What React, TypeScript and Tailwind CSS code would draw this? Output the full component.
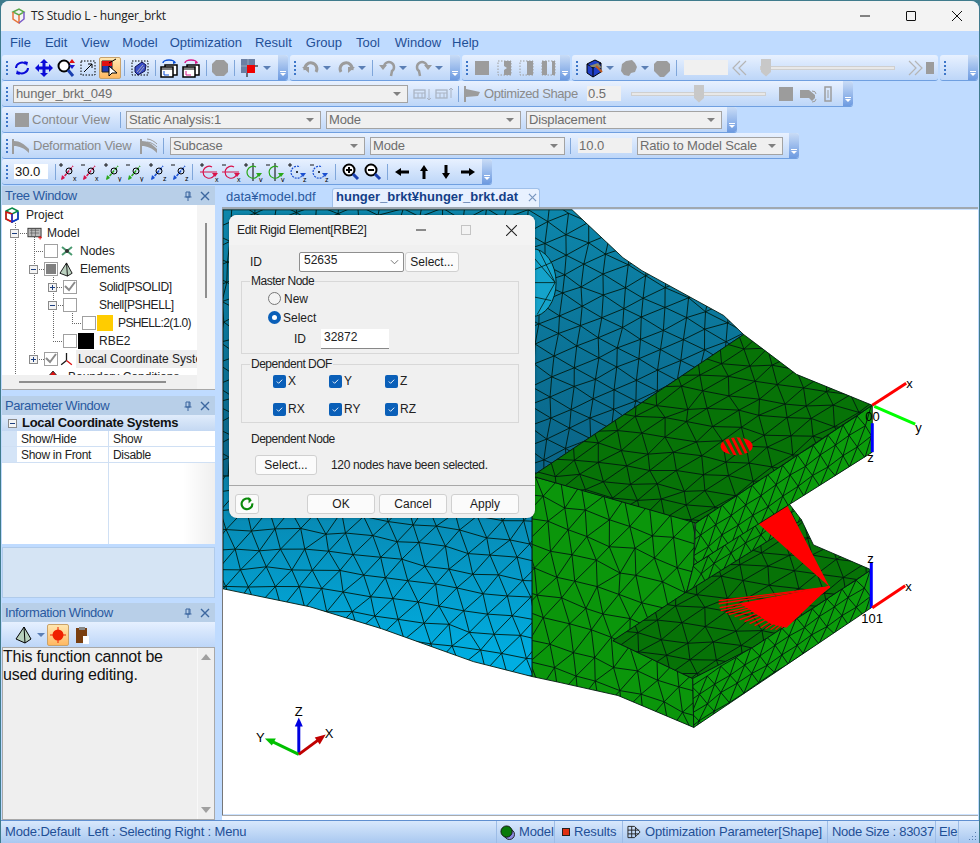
import React from "react";

type P = [number, number];
const rnd = (a: number, b: number) => {
  const s = Math.sin(a * 127.1 + b * 311.7) * 43758.5453;
  return s - Math.floor(s) - 0.5;
};
function lattice(o: P, u: P, v: P, nu: number, nv: number, jit = 4, wave?: (x: number, y: number) => P) {
  const pt = (i: number, j: number): string => {
    const odd = j % 2 ? 0.5 : 0;
    let x = o[0] + (i + odd) * u[0] + j * v[0] + rnd(i, j) * jit;
    let y = o[1] + (i + odd) * u[1] + j * v[1] + rnd(j + 9, i + 3) * jit;
    if (wave) {
      const w = wave(x, y);
      x += w[0];
      y += w[1];
    }
    return `${x.toFixed(1)} ${y.toFixed(1)}`;
  };
  let d = "";
  for (let j = 0; j <= nv; j++)
    for (let i = 0; i <= nu; i++) {
      d += `M${pt(i, j)}L${pt(i + 1, j)}`;
      if (j < nv) {
        const odd = j % 2 === 1;
        d += `M${pt(i, j)}L${pt(odd ? i : i - 1, j + 1)}M${pt(i, j)}L${pt(odd ? i + 1 : i, j + 1)}`;
      }
    }
  return d;
}
const Surf = ({ id, pts, fill, d }: { id: string; pts: string; fill: string; d: string }) => (
  <g>
    <clipPath id={id}>
      <polygon points={pts} />
    </clipPath>
    <polygon points={pts} fill={fill} />
    <path d={d} clipPath={`url(#${id})`} stroke="#021a10" strokeWidth="0.9" fill="none" />
    <polygon points={pts} fill="none" stroke="#021a10" strokeWidth="0.9" />
  </g>
);
const fanTips: P[] = [[720,601],[720,604],[721,608],[722,611],[727,613],[730,615],[736,617],[741,620],[746,622],[751,624],[756,626],[762,628],[767,629],[772,630],[777,630],[783,628]];

function Viewport() {
  return (
    <svg viewBox="223 209 757 606" className="block h-[606px] w-[757px]">
      <defs>
        <linearGradient id="gA" gradientUnits="userSpaceOnUse" x1="0" y1="209" x2="0" y2="470">
          <stop offset="0" stopColor="#0d86ab" />
          <stop offset="1" stopColor="#0a6487" />
        </linearGradient>
        <linearGradient id="gB" gradientUnits="userSpaceOnUse" x1="0" y1="470" x2="0" y2="660">
          <stop offset="0" stopColor="#0a7fa6" />
          <stop offset="1" stopColor="#00aee2" />
        </linearGradient>
      </defs>
      <rect x="223" y="209" width="757" height="606" fill="#fff" />
      <Surf id="cA" fill="url(#gA)" pts="223,209 573,209 624,257 643,270 725,315 745,334 533,476 223,476" d={lattice([330, 80], [20, 11], [-12, 15], 36, 30, 4)} />
      <ellipse cx="533" cy="282" rx="24" ry="34" fill="#15a3cb" stroke="#021a10" strokeWidth="0.9" />
      <path d="M556 282L533 255M556 282L540 250M556 282L533 282M556 282L538 314M552 262L533 270M552 300L533 296" stroke="#021a10" strokeWidth="0.8" />
      <Surf id="cB" fill="url(#gB)" pts="223,476 533,476 533,677 474,662 382,629 310,607 223,589" d={lattice([200, 450], [24, 2], [-5, 19], 16, 13, 5, (x) => [0, 6 * Math.sin(x / 70)])} />
      <Surf id="cC" fill="#0b960b" pts="533,476 696,522 695,565 688,592 614,641 694,679 695,728 619,696 561,683 533,677" d={lattice([510, 440], [22, 7], [-6, 22], 11, 14, 7)} />
      <Surf id="cD" fill="#077307" pts="688,592 803,520 815,545 873,570 754,648 694,679 614,641" d={lattice([540, 640], [21, -14], [15, 10], 20, 16, 6)} />
      <Surf id="cW" fill="#0b960b" pts="695,565 790,503 803,520 688,592" d={lattice([695, 565], [15, -10], [-1, 14], 10, 3, 3)} />
      <Surf id="cE" fill="#0b9c0b" pts="873,570 754,648 694,679 695,728 873,608" d={lattice([873, 570], [-15, 9.7], [0, 13.5], 13, 5, 2)} />
      <polygon points="788,504 759,523 831,587" fill="#ff0000" />
      <polygon points="831,587 742,604 772,624 788,628" fill="#ff0000" />
      {fanTips.map((t, i) => (
        <line key={i} x1="831" y1="587" x2={t[0]} y2={t[1]} stroke="#ff0000" strokeWidth="1.3" />
      ))}
      <Surf id="cG" fill="#077307" pts="745,334 798,374 874,405 697,523 533,476" d={lattice([500, 450], [21, -14], [15, 10], 24, 22, 7)} />
      <Surf id="cF" fill="#0b9c0b" pts="874,405 697,523 695,565 874,452" d={lattice([874, 405], [-15, 10], [0, 15.5], 13, 4, 2)} />
      <clipPath id="cH">
        <ellipse cx="738" cy="446" rx="16" ry="9" />
      </clipPath>
      <ellipse cx="738" cy="446" rx="16" ry="9" fill="#ff0000" />
      <path d="M724 438L734 456M730 436L740 456M736 436L746 456M742 436L752 456" stroke="#0a6a0a" strokeWidth="2.6" clipPath="url(#cH)" />
      <line x1="874" y1="405" x2="908" y2="383" stroke="#ff0000" strokeWidth="3" />
      <line x1="876" y1="406" x2="917" y2="424" stroke="#00ff00" strokeWidth="3" />
      <line x1="874" y1="423" x2="874" y2="452" stroke="#0000ff" strokeWidth="3" />
      <line x1="873" y1="563" x2="873" y2="608" stroke="#0000ff" strokeWidth="3" />
      <line x1="874" y1="608" x2="907" y2="586" stroke="#ff0000" strokeWidth="3" />
      <g fontFamily="'Liberation Sans',sans-serif" fontSize="13" fill="#000">
        <text x="908" y="388">x</text>
        <text x="917" y="432">y</text>
        <text x="869" y="462">z</text>
        <text x="867" y="421">00</text>
        <text x="869" y="563">z</text>
        <text x="907" y="591">x</text>
        <text x="863" y="623">101</text>
        <text x="295" y="717">Z</text>
        <text x="256" y="743">Y</text>
        <text x="325" y="739">X</text>
      </g>
      <line x1="299" y1="755" x2="299" y2="725" stroke="#0000e0" strokeWidth="3" />
      <polygon points="299,718 295,727 303,727" fill="#0000e0" />
      <line x1="299" y1="755" x2="272" y2="742" stroke="#00c000" strokeWidth="3" />
      <polygon points="265,739 276,739 272,746" fill="#00c000" />
      <line x1="299" y1="755" x2="318" y2="741" stroke="#c00000" strokeWidth="3" />
      <polygon points="326,735 315,738 320,745" fill="#c00000" />
    </svg>
  );
}

const I = ({ children }: { children: React.ReactNode }) => (
  <svg viewBox="0 0 20 20" className="h-[20px] w-[20px]">{children}</svg>
);
const Slot = ({ className = "", children }: { className?: string; children?: React.ReactNode }) => (
  <div className={`flex h-[22px] w-[22px] shrink-0 items-center justify-center ${className}`}>{children}</div>
);
const Sep = ({ className = "" }: { className?: string }) => <div className={`h-[16px] w-[1px] shrink-0 bg-[#7fa6da] ${className}`} />;
const Arrow = ({ className = "" }: { className?: string }) => (
  <div className={`h-0 w-0 shrink-0 border-x-[4px] border-t-[4px] border-x-transparent border-t-[#5b7fb5] ${className}`} />
);
const Grip = () => (
  <div className="flex h-full w-[9px] shrink-0 flex-col items-end justify-center gap-[2px] pr-[3px]">
    <div className="h-[2px] w-[2px] bg-[#3d76c8]" />
    <div className="h-[2px] w-[2px] bg-[#3d76c8]" />
    <div className="h-[2px] w-[2px] bg-[#3d76c8]" />
    <div className="h-[2px] w-[2px] bg-[#3d76c8]" />
  </div>
);
const Handle = () => (
  <div className="ml-auto flex h-full w-[10px] shrink-0 flex-col items-center justify-end rounded-r-[3px] bg-gradient-to-b from-[#c9dcf6] to-[#6d9ae0] pb-[4px]">
    <div className="mb-[1px] h-[1px] w-[6px] bg-white" />
    <div className="h-0 w-0 border-x-[3px] border-t-[3px] border-x-transparent border-t-white" />
  </div>
);
const Bar = ({ className = "", children, handle = true }: { className?: string; children?: React.ReactNode; handle?: boolean }) => (
  <div className={`flex h-[26px] shrink-0 items-center rounded-[3px] border-b border-[#6f9fe0] bg-gradient-to-b from-[#e8f1ff] to-[#bdd6f8] ${className}`}>
    <Grip />
    {children}
    {handle && <Handle />}
  </div>
);
const Sel = ({ className = "", children }: { className?: string; children?: React.ReactNode }) => (
  <div className={`flex h-[18px] shrink-0 items-center justify-between border border-[#a3a3a3] bg-[#f0f0f0] pl-[2px] pr-[6px] text-[13px] tracking-[-0.15px] text-[#6d6d6d] ${className}`}>
    <span className="whitespace-nowrap">{children}</span>
    <div className="h-0 w-0 border-x-[4px] border-t-[4px] border-x-transparent border-t-[#808080]" />
  </div>
);
const Input = ({ className = "", children }: { className?: string; children?: React.ReactNode }) => (
  <div className={`flex h-[15px] shrink-0 items-center bg-[#f0f0f0] pl-[1px] text-[13px] text-[#6d6d6d] ${className}`}>{children}</div>
);
const Slider = ({ className = "", thumb }: { className?: string; thumb: string }) => (
  <div className={`flex h-[4px] shrink-0 border border-[#cfcfcf] bg-[#e8e8e8] ${className}`}>
    <div className={`-mt-[8px] h-[18px] w-[10px] shrink-0 bg-[#c8c8c8] [clip-path:polygon(0_0,100%_0,100%_75%,50%_100%,0_75%)] ${thumb}`} />
  </div>
);

const G = "#9c9c9c";
const BL = "#0a0ad8";
const Rotate = () => (
  <I>
    <path d="M4 10a6 5.5 0 0 1 10-4M16 10a6 5.5 0 0 1-10 4" fill="none" stroke={BL} strokeWidth="2" />
    <path d="M12 3l4 1-1 4zM8 17l-4-1 1-4z" fill={BL} />
  </I>
);
const Move = () => (
  <I>
    <path d="M10 1l4 4h-2.5v3.5H15V6l4 4-4 4v-2.5h-3.5V15H14l-4 4-4-4h2.5v-3.5H5V14l-4-4 4-4v2.5h3.5V5H6z" fill={BL} />
  </I>
);
const Zoom = () => (
  <I>
    <circle cx="8" cy="8" r="5.5" fill="#fff" stroke="#000" strokeWidth="2" />
    <line x1="12" y1="12" x2="17" y2="18" stroke="#1a3fb0" strokeWidth="3" />
    <path d="M15 1l3 4h-6z" fill="#e01010" transform="translate(1 0)" />
    <path d="M13 7h6l-3 4z" fill="#1a1ad0" />
  </I>
);
const Fit = () => (
  <I>
    <rect x="3" y="3" width="14" height="14" fill="none" stroke="#000" strokeWidth="1" strokeDasharray="1.5 1.5" />
    <path d="M6 14L14 6M10 6h4v4" fill="none" stroke="#000" />
  </I>
);
const Hidden = () => (
  <I>
    <rect x="2" y="3" width="16" height="14" fill="none" stroke="#000" strokeDasharray="1.5 1.5" />
    <path d="M5 9l7-5 4 3-1 6-7 4-3-3z" fill="#3b4fc8" stroke="#101050" />
    <path d="M7 14l6-7M9 15l5-6" stroke="#aab" />
  </I>
);
const Win = ({ c }: { c: string }) => (
  <I>
    <path d="M4 5a6 3 0 0 1 12 0" fill="none" stroke={c} strokeWidth="1.5" />
    <path d="M14 3l3 2-3 1z" fill={c} />
    <rect x="6" y="7" width="12" height="10" fill="#fff" stroke="#000" strokeWidth="1.5" />
    <rect x="2" y="9" width="12" height="10" fill="#fff" stroke="#000" strokeWidth="1.5" />
    <path d="M2 11h12" stroke="#000" />
    <path d="M5 13v4h5" fill="none" stroke={c} />
  </I>
);
const Oct = () => (
  <I>
    <polygon points="6,2 14,2 18,6 18,14 14,18 6,18 2,14 2,6" fill={G} />
  </I>
);
const Color = () => (
  <I>
    <rect x="1" y="1" width="14" height="14" fill="#6b7fa3" />
    <path d="M8 1v14M1 8h14" stroke="#9ab" />
    <rect x="7" y="7" width="8" height="8" fill="#f00000" />
    <path d="M15 8h3M7 15v4" stroke="#000" />
  </I>
);
const Undo = ({ flip }: { flip?: boolean }) => (
  <I>
    <g transform={flip ? "matrix(-1 0 0 1 20 0)" : undefined}>
      <path d="M4 12a6 6 0 1 1 11 2" fill="none" stroke={G} strokeWidth="3" />
      <path d="M1 9h7v6z" fill={G} />
    </g>
  </I>
);
const Redo2 = ({ flip }: { flip?: boolean }) => (
  <I>
    <g transform={flip ? "matrix(-1 0 0 1 20 0)" : undefined}>
      <path d="M6 9a5 5 0 1 1 8 4l-1 5" fill="none" stroke={G} strokeWidth="2.5" />
      <path d="M1 7h8l-4 5z" fill={G} />
    </g>
  </I>
);
const GSquare = () => (
  <I>
    <rect x="3" y="3" width="14" height="14" fill={G} />
  </I>
);
const Half = ({ kind }: { kind: number }) => (
  <I>
    <rect x="4" y="3" width="13" height="14" fill="none" stroke={G} strokeDasharray="1.5 1.5" />
    {kind === 0 && <path d="M10 3h7v14h-7v-5l3-2-3-2z" fill={G} />}
    {kind === 1 && <rect x="11" y="3" width="6" height="14" fill={G} />}
    {kind === 2 && <path d="M4 3h5v14H4zM14 3h3v14h-3z" fill={G} />}
  </I>
);
const Cube = () => (
  <I>
    <path d="M3 6l8-4 6 3v9l-8 5-6-4z" fill="#1f3fc8" stroke="#000" />
    <path d="M3 6l6 4 8-5M9 10v9" stroke="#000" fill="none" />
    <path d="M5 8l9-3 4 5-10-1z" fill="#8a8a70" />
    <path d="M12 8l6 6" stroke="#c05a20" strokeWidth="2" />
  </I>
);
const GBlob = () => (
  <I>
    <path d="M7 3l6-1 3 3 2 4-2 5-4 1-2 3-5-1-3-4 1-7z" fill={G} />
  </I>
);
const GBlob2 = () => (
  <I>
    <path d="M5 3h10l3 3v7l-4 4-2 2H8l-2-2-4-4V6z" fill={G} />
  </I>
);
const Chevs = ({ left }: { left?: boolean }) => (
  <I>
    <path d={left ? "M10 3L3 10l7 7M16 3l-7 7 7 7" : "M4 3l7 7-7 7M10 3l7 7-7 7"} fill="none" stroke="#b5b5b5" strokeWidth="1.2" />
  </I>
);
const SmallDown = ({ up }: { up?: boolean }) => (
  <I>
    <rect x="2" y="6" width="11" height="8" fill="none" stroke="#aab4c4" strokeWidth="1.3" />
    <path d="M2 9h11M6 9v5M10 9v5" stroke="#aab4c4" />
    <path d={up ? "M17 14V4M15 6l2-2 2 2" : "M17 5v11M15 14l2 2 2-2"} fill="none" stroke="#aab4c4" />
  </I>
);
const Flag = () => (
  <I>
    <path d="M2 2v16" stroke={G} strokeWidth="2" />
    <path d="M3 5l14 3-2 4-12 1z" fill={G} />
  </I>
);
const Beam = ({ wave }: { wave?: boolean }) => (
  <I>
    <path d="M2 3v15" stroke={G} strokeWidth="2" />
    <path d="M3 5c6 0 10 3 15 8v4C13 12 8 10 3 10z" fill={G} />
    {wave && <path d="M8 3c4 0 8 3 10 5M8 6c4 0 8 3 10 5" fill="none" stroke={G} />}
  </I>
);
const Pen = () => (
  <I>
    <path d="M2 4v14M2 6h9l6 5v3l-3 3-3-3H2z" fill={G} />
    <path d="M14 7a4 3 0 0 1 4 3M14 18a4 3 0 0 0 4-3" fill="none" stroke={G} />
  </I>
);
const Rect2 = () => (
  <I>
    <rect x="7" y="3" width="6" height="14" fill="none" stroke={G} strokeWidth="1.5" />
    <path d="M10 6v8" stroke={G} />
  </I>
);
const Ax = ({ c, plus, l }: { c: string; plus?: boolean; l: string }) => (
  <I>
    <path d={plus ? "M1 3h4M3 1v4" : "M1 3h4"} stroke="#000" strokeWidth="0.9" />
    <path d="M4 17L15 4" stroke={c} strokeWidth="1.5" strokeDasharray="3 1" />
    <path d="M3 18l1-5 3 3z" fill={c} />
    <circle cx="11" cy="9" r="3" fill="none" stroke="#000" />
    <text x="15" y="19" fontSize="7" fill="#000" fontFamily="'Liberation Sans',sans-serif">{l}</text>
  </I>
);
const Sp = ({ c, plus, l, dir }: { c: string; plus?: boolean; l: string; dir: "h" | "v" | "z" }) => (
  <I>
    <path d={plus ? "M0 3h4M2 1v4" : "M0 3h4"} stroke="#000" strokeWidth="0.9" />
    {dir === "h" && <path d="M0 10h17" stroke={c} strokeWidth="1" />}
    {dir === "v" && <path d="M9 1v18" stroke="#000" strokeWidth="1" />}
    <path d="M15 11a6 6 0 1 1-3-6" fill="none" stroke={c} strokeWidth="1.2" strokeDasharray={dir === "z" ? "2 1" : undefined} />
    <path d="M15 15l-3-4h6z" fill={c} />
    {dir === "z" && <circle cx="9" cy="10" r="1" fill="#000" />}
    <text x="15" y="19.5" fontSize="7" fill="#000" fontFamily="'Liberation Sans',sans-serif">{l}</text>
  </I>
);
const Mag = ({ plus }: { plus?: boolean }) => (
  <I>
    <circle cx="8" cy="8" r="5.5" fill="#fff" stroke="#000" strokeWidth="2" />
    <path d={plus ? "M5 8h6M8 5v6" : "M5 8h6"} stroke="#000" strokeWidth="2" />
    <line x1="12" y1="12" x2="17" y2="17" stroke="#1a3fb0" strokeWidth="3" />
  </I>
);
const Dir = ({ r }: { r: number }) => (
  <I>
    <path d="M10 3l4 6h-2.5v8h-3V9H6z" fill="#000" transform={`rotate(${r} 10 10)`} />
  </I>
);
const Pyramid = () => (
  <I>
    <path d="M10 2l7 12-6 4-9-4z" fill="#b8d0bc" stroke="#000" />
    <path d="M10 2l1 16" stroke="#000" />
  </I>
);

const Exp = ({ minus, className = "" }: { minus?: boolean; className?: string }) => (
  <div className={`flex h-[9px] w-[9px] shrink-0 items-center justify-center border border-[#8a8a8a] bg-[#f4f4f4] text-[#333] ${className}`}>
    <svg viewBox="0 0 7 7" className="h-[7px] w-[7px]">
      <path d={minus ? "M1 3.5h5" : "M1 3.5h5M3.5 1v5"} stroke="#1c3f80" />
    </svg>
  </div>
);
const Cb = ({ state, className = "" }: { state?: "check" | "fill"; className?: string }) => (
  <div className={`flex h-[14px] w-[14px] shrink-0 items-center justify-center border border-[#a0a0a0] bg-white ${className}`}>
    {state === "fill" && <div className="h-[10px] w-[10px] bg-[#808080]" />}
    {state === "check" && (
      <svg viewBox="0 0 12 12" className="h-[12px] w-[12px]">
        <path d="M1 5l4 4 6-8" fill="none" stroke="#8a8a8a" strokeWidth="2" />
      </svg>
    )}
  </div>
);
const PaneHead = ({ children }: { children: React.ReactNode }) => (
  <div className="flex h-[19px] shrink-0 items-center justify-between bg-[#b8cfe8] pl-[3px] pr-[5px] text-[13px] tracking-[-0.4px] text-[#2a5aa0]">
    <span>{children}</span>
    <div className="flex items-center gap-[7px]">
      <svg viewBox="0 0 10 10" className="h-[10px] w-[10px]">
        <path d="M3 1h4v5H3zM1.5 6h7M5 6v4M6 1v5" fill="none" stroke="#3c679f" />
      </svg>
      <svg viewBox="0 0 10 10" className="h-[10px] w-[10px]">
        <path d="M1 1l8 8M9 1l-8 8" stroke="#3c679f" strokeWidth="1.4" />
      </svg>
    </div>
  </div>
);
const Row = ({ className = "", children }: { className?: string; children: React.ReactNode }) => (
  <div className={`flex h-[18px] shrink-0 items-center whitespace-nowrap text-[12px] text-[#222] ${className}`}>{children}</div>
);
const TreeLines = () => (
  <svg className="absolute left-0 top-0 h-[170px] w-[195px]" viewBox="0 0 195 170">
    <path
      d="M13 18v152M18 28h7M32 28v80M32 46h12M37 64h7M51 64v70M51 82h12M56 100h7M70 100v18M70 118h12M51 136h12M37 154h7M32 64v90"
      fill="none"
      stroke="#666"
      strokeDasharray="1 1"
      shapeRendering="crispEdges"
    />
  </svg>
);
const DlgBtn = ({ className = "", children }: { className?: string; children: React.ReactNode }) => (
  <div className={`flex h-[20px] shrink-0 items-center justify-center rounded-[3px] border border-[#d0d0d0] bg-[#fbfbfb] text-[12px] text-[#1a1a1a] ${className}`}>{children}</div>
);
const Dof = ({ className = "", children }: { className?: string; children: string }) => (
  <div className={`flex items-center gap-[2px] text-[12px] text-[#222] ${className}`}>
    <div className="flex h-[13px] w-[13px] items-center justify-center rounded-[2px] bg-[#0a5fb8]">
      <svg viewBox="0 0 10 10" className="h-[9px] w-[9px]">
        <path d="M2 5l2 2 4-4" fill="none" stroke="#fff" strokeWidth="1" />
      </svg>
    </div>
    {children}
  </div>
);
const Legend = ({ children }: { children: string }) => (
  <span className="absolute -top-[8px] left-[8px] bg-[#f0f0f0] px-[1px] text-[12px] leading-[15px] tracking-[-0.5px] text-[#222]">{children}</span>
);

function Dialog() {
  return (
    <div className="absolute left-[229px] top-[215px] flex h-[303px] w-[306px] flex-col rounded-[8px] bg-[#f0f0f0] font-['Liberation_Sans',sans-serif] text-[#222] shadow-[0_0_3px_rgba(0,0,0,0.35)]">
      <div className="flex h-[30px] shrink-0 items-center rounded-t-[8px] bg-[#f3f3f3] pl-[8px] text-[12px]">
        <span className="w-[130px] whitespace-nowrap tracking-[-0.3px]">Edit Rigid Element[RBE2]</span>
        <svg viewBox="0 0 10 10" className="ml-[49px] h-[10px] w-[10px]"><path d="M0 5h10" stroke="#222" /></svg>
        <div className="ml-[35px] h-[10px] w-[10px] border border-[#c4c4c4]" />
        <svg viewBox="0 0 10 10" className="ml-[35px] h-[11px] w-[11px]"><path d="M0 0l10 10M10 0L0 10" stroke="#222" /></svg>
      </div>
      <div className="mt-[3px] flex h-[27px] shrink-0 items-center pl-[21px] text-[12px]">
        <span className="w-[49px]">ID</span>
        <div className="flex h-[20px] w-[105px] items-center justify-between rounded-[2px] border border-[#8f8f8f] bg-white pl-[4px] pr-[4px]">
          <span className="-mt-[3px]">52635</span>
          <svg viewBox="0 0 10 6" className="h-[6px] w-[9px]"><path d="M1 1l4 4 4-4" fill="none" stroke="#666" /></svg>
        </div>
        <DlgBtn className="ml-[1px] w-[54px]">Select...</DlgBtn>
      </div>
      <div className="relative ml-[12px] mt-[6px] flex h-[73px] w-[278px] shrink-0 flex-col border border-[#d8d8d8] pl-[26px] pt-[9px] text-[12px]">
        <Legend>Master Node</Legend>
        <div className="flex h-[15px] items-center gap-[3px]">
          <div className="h-[13px] w-[13px] rounded-full border border-[#777] bg-[#f4f4f4]" />
          <span>New</span>
        </div>
        <div className="mt-[4px] flex h-[15px] items-center gap-[2px]">
          <div className="flex h-[13px] w-[13px] items-center justify-center rounded-full bg-[#0a5fb8]">
            <div className="h-[5px] w-[5px] rounded-full bg-white" />
          </div>
          <span>Select</span>
        </div>
        <div className="mt-[4px] flex h-[20px] items-center">
          <span className="ml-[26px] w-[27px]">ID</span>
          <div className="flex h-[20px] w-[68px] items-center border-b border-[#888] bg-white pb-[3px] pl-[3px]">32872</div>
        </div>
      </div>
      <div className="relative ml-[12px] mt-[10px] h-[59px] w-[278px] shrink-0 border border-[#d8d8d8]">
        <Legend>Dependent DOF</Legend>
        <div className="grid grid-cols-[56px_56px_56px] gap-y-[10px] pl-[31px] pt-[7px]">
          <Dof>X</Dof>
          <Dof>Y</Dof>
          <Dof>Z</Dof>
          <Dof>RX</Dof>
          <Dof>RY</Dof>
          <Dof>RZ</Dof>
        </div>
      </div>
      <div className="ml-[22px] mt-[9px] h-[15px] shrink-0 text-[12px] leading-[15px] tracking-[-0.5px]">Dependent Node</div>
      <div className="ml-[26px] mt-[8px] flex shrink-0 items-center text-[12px]">
        <DlgBtn className="w-[62px]">Select...</DlgBtn>
        <span className="ml-[14px] tracking-[-0.35px]">120 nodes have been selected.</span>
      </div>
      <div className="mt-[10px] h-[1px] w-full shrink-0 bg-[#a8a8a8]" />
      <div className="flex items-center pl-[6px] pt-[8px]">
        <DlgBtn className="w-[24px]">
          <svg viewBox="0 0 14 14" className="h-[15px] w-[15px]">
            <path d="M11.5 6a5 5 0 1 1-2-3.6" fill="none" stroke="#0a8a0a" strokeWidth="2" />
            <path d="M8 0l3 3-3 3z" fill="#0a8a0a" />
          </svg>
        </DlgBtn>
        <DlgBtn className="ml-[48px] w-[68px]">OK</DlgBtn>
        <DlgBtn className="ml-[4px] w-[68px]">Cancel</DlgBtn>
        <DlgBtn className="ml-[4px] w-[68px]">Apply</DlgBtn>
      </div>
    </div>
  );
}

export default function App() {
  return (
    <div className="relative h-[843px] w-[980px] overflow-hidden bg-[#3f7b8c] font-['Liberation_Sans',sans-serif]">
      <div className="mx-[1px] mt-[1px] flex h-[842px] flex-col overflow-hidden rounded-t-[8px] bg-[#bfdbff] pl-[1px] pr-[1px]">
        <div className="-mx-[2px] flex h-[30px] shrink-0 items-center bg-[#f3f3f3] pl-[10px]">
          <svg viewBox="0 0 16 16" className="h-[16px] w-[16px]">
            <path d="M3 4l6-3 5 3-5 3z" fill="none" stroke="#5aa84a" strokeWidth="1.5" />
            <path d="M3 4v7l6 4V7" fill="none" stroke="#e8743a" strokeWidth="1.5" />
            <path d="M14 4v7l-5 4" fill="none" stroke="#7a5ac8" strokeWidth="1.5" />
          </svg>
          <span className="ml-[5px] font-['Open_Sans',sans-serif] text-[12px] tracking-[-0.2px] text-[#222]">TS Studio L - hunger_brkt</span>
          <svg viewBox="0 0 10 10" className="ml-auto mr-[36px] h-[10px] w-[10px]"><path d="M0 5h10" stroke="#111" /></svg>
          <div className="mr-[36px] h-[10px] w-[10px] rounded-[1px] border border-[#111]" />
          <svg viewBox="0 0 10 10" className="mr-[18px] h-[10px] w-[10px]"><path d="M0 0l10 10M10 0L0 10" stroke="#111" /></svg>
        </div>
        <div className="flex h-[24px] shrink-0 items-center pl-[8px] text-[13px] text-[#1f4f96]">
          <span>File</span>
          <span className="ml-[14px]">Edit</span>
          <span className="ml-[14px]">View</span>
          <span className="ml-[13px]">Model</span>
          <span className="ml-[12px]">Optimization</span>
          <span className="ml-[13px]">Result</span>
          <span className="ml-[14px]">Group</span>
          <span className="ml-[14px]">Tool</span>
          <span className="ml-[15px]">Window</span>
          <span className="ml-[11px]">Help</span>
        </div>
        <div className="flex shrink-0 gap-[2px]">
          <Bar className="w-[286px]">
            <Slot><Rotate /></Slot>
            <Slot><Move /></Slot>
            <Slot><Zoom /></Slot>
            <Slot><Fit /></Slot>
            <Slot className="rounded-[2px] border border-[#c9a26a] bg-gradient-to-b from-[#ffe7b0] to-[#ffb860]">
              <I>
                <path d="M2 3h10v11H2z" fill="#2038b0" stroke="#222" />
                <path d="M2 3h10v5H2z" fill="#e01010" />
                <path d="M9 8v10l3-3h5zM9 5l7-4" fill="#fff" stroke="#000" />
              </I>
            </Slot>
            <Sep className="ml-[3px]" />
            <Slot className="ml-[4px]"><Hidden /></Slot>
            <Sep className="ml-[4px]" />
            <Slot className="ml-[2px]"><Win c="#0a4fd8" /></Slot>
            <Slot><Win c="#d81a8a" /></Slot>
            <Sep className="ml-[4px]" />
            <Slot className="ml-[2px]"><Oct /></Slot>
            <Sep className="ml-[3px]" />
            <Slot className="ml-[4px]"><Color /></Slot>
            <Arrow className="ml-[2px]" />
          </Bar>
          <Bar className="w-[170px]">
            <Slot className="ml-[1px]"><Undo /></Slot>
            <Arrow className="ml-[1px]" />
            <Slot className="ml-[4px]"><Undo flip /></Slot>
            <Arrow className="ml-[1px]" />
            <Sep className="ml-[6px]" />
            <Slot className="ml-[4px]"><Redo2 /></Slot>
            <Arrow />
            <Slot className="ml-[5px]"><Redo2 flip /></Slot>
            <Arrow className="ml-[1px]" />
          </Bar>
          <Bar className="w-[108px]">
            <Slot><GSquare /></Slot>
            <Slot><Half kind={0} /></Slot>
            <Slot><Half kind={1} /></Slot>
            <Slot><Half kind={2} /></Slot>
          </Bar>
          <Bar className="w-[366px]" handle={false}>
            <Slot className="ml-[2px]"><Cube /></Slot>
            <Arrow className="ml-[1px]" />
            <Slot className="ml-[4px]"><GBlob /></Slot>
            <Arrow className="ml-[1px]" />
            <Slot className="ml-[2px]"><GBlob2 /></Slot>
            <Sep className="ml-[3px]" />
            <Input className="ml-[7px] w-[44px]" />
            <Slot className="ml-[1px]"><Chevs left /></Slot>
            <Slider className="ml-[9px] w-[135px]" thumb="ml-0" />
            <Slot className="ml-[9px]"><Chevs /></Slot>
            <div className="h-[12px] w-[8px] shrink-0 bg-[#9c9c9c]" />
          </Bar>
          <Bar className="w-[38px]" />
        </div>
        <Bar className="w-[851px]">
          <Sel className="ml-[2px] w-[395px]">hunger_brkt_049</Sel>
          <Slot className="ml-[3px]"><SmallDown /></Slot>
          <Slot><SmallDown up /></Slot>
          <Sep className="ml-[3px]" />
          <Slot className="ml-[3px]"><Flag /></Slot>
          <span className="w-[93px] whitespace-nowrap text-[13px] tracking-[-0.4px] text-[#8a8a8a]">Optimized Shape</span>
          <Input className="ml-[10px] w-[34px]">0.5</Input>
          <Slider className="ml-[10px] w-[135px]" thumb="ml-[62px]" />
          <Slot className="ml-[9px]"><GSquare /></Slot>
          <Slot><Pen /></Slot>
          <Slot className="-ml-[2px]"><Rect2 /></Slot>
        </Bar>
        <Bar className="w-[735px]">
          <div className="ml-[4px] h-[14px] w-[14px] shrink-0 bg-[#9c9c9c]" />
          <span className="ml-[3px] w-[78px] whitespace-nowrap text-[13px] text-[#8a8a8a]">Contour View</span>
          <Sep className="ml-[10px]" />
          <Sel className="ml-[5px] w-[195px]">Static Analysis:1</Sel>
          <Sel className="ml-[5px] w-[195px]">Mode</Sel>
          <Sel className="ml-[5px] w-[196px]">Displacement</Sel>
        </Bar>
        <Bar className="w-[797px]">
          <Slot className="-ml-[1px]"><Beam /></Slot>
          <span className="ml-[1px] w-[99px] whitespace-nowrap text-[13px] tracking-[-0.25px] text-[#8a8a8a]">Deformation View</span>
          <Slot className="ml-[6px]"><Beam wave /></Slot>
          <Sep className="ml-[3px]" />
          <Sel className="ml-[6px] w-[195px]">Subcase</Sel>
          <Sel className="ml-[5px] w-[195px]">Mode</Sel>
          <Sep className="ml-[5px]" />
          <Input className="ml-[7px] w-[54px]">10.0</Input>
          <Sel className="ml-[5px] w-[146px]">Ratio to Model Scale</Sel>
        </Bar>
        <Bar className="w-[490px]">
          <div className="ml-[3px] flex h-[15px] w-[34px] shrink-0 items-center bg-white pl-[1px] text-[13px] text-[#111]">30.0</div>
          <Sep className="ml-[7px]" />
          <Slot className="ml-[1px]"><Ax c="#d8124a" plus l="x" /></Slot>
          <Slot><Ax c="#d8124a" l="x" /></Slot>
          <Slot className="ml-[1px]"><Ax c="#2aa81a" plus l="y" /></Slot>
          <Slot><Ax c="#2aa81a" l="y" /></Slot>
          <Slot className="ml-[1px]"><Ax c="#1a4fd0" plus l="z" /></Slot>
          <Slot><Ax c="#1a4fd0" l="z" /></Slot>
          <Sep className="ml-[1px]" />
          <Slot className="ml-[6px]"><Sp c="#d8124a" plus l="x" dir="h" /></Slot>
          <Slot><Sp c="#d8124a" l="x" dir="h" /></Slot>
          <Slot><Sp c="#2aa81a" plus l="y" dir="v" /></Slot>
          <Slot><Sp c="#2aa81a" l="y" dir="v" /></Slot>
          <Slot><Sp c="#1a4fd0" plus l="z" dir="z" /></Slot>
          <Slot><Sp c="#1a4fd0" l="z" dir="z" /></Slot>
          <Sep className="ml-[4px]" />
          <Slot className="ml-[4px]"><Mag plus /></Slot>
          <Slot><Mag /></Slot>
          <Sep className="ml-[3px]" />
          <Slot className="ml-[3px]"><Dir r={-90} /></Slot>
          <Slot><Dir r={0} /></Slot>
          <Slot><Dir r={180} /></Slot>
          <Slot><Dir r={90} /></Slot>
        </Bar>
        <div className="flex min-h-0 flex-1 pt-[1px]">
          <div className="flex w-[213px] shrink-0 flex-col">
            <PaneHead>Tree Window</PaneHead>
            <div className="relative flex h-[185px] shrink-0 border-b border-[#a8a8a8] bg-[#f0f0f0]">
              <div className="relative h-[170px] w-[195px] shrink-0 overflow-hidden bg-white pt-[1px]">
                <TreeLines />
                <div className="relative flex flex-col">
                  <Row className="pl-[2px]">
                    <svg viewBox="0 0 16 16" className="h-[16px] w-[16px]">
                      <path d="M8 1l6 3v8l-6 3-6-3V4z" fill="#fff" stroke="#0a8a4a" strokeWidth="1.5" />
                      <path d="M2 4l6 3 6-3" fill="none" stroke="#0a8a4a" strokeWidth="1.5" />
                      <path d="M2 5v7l6 3V7z" fill="none" stroke="#e01010" strokeWidth="1.5" />
                      <path d="M14 5v7l-6 3V7" fill="none" stroke="#1030d0" strokeWidth="1.5" />
                    </svg>
                    <span className="ml-[6px]">Project</span>
                  </Row>
                  <Row className="pl-[8px]">
                    <Exp minus />
                    <svg viewBox="0 0 16 14" className="ml-[8px] h-[14px] w-[15px]">
                      <rect x="1" y="2" width="14" height="9" fill="#bbb" stroke="#333" />
                      <path d="M3 4h10M3 7h10M5 2v9M9 2v9" stroke="#555" strokeWidth="0.7" />
                      <path d="M14 10v4M12 12h4" stroke="#e01010" />
                    </svg>
                    <span className="ml-[5px]">Model</span>
                  </Row>
                  <Row className="pl-[42px]">
                    <Cb />
                    <svg viewBox="0 0 14 14" className="ml-[2px] h-[14px] w-[14px]">
                      <path d="M2 3l10 8M12 3L2 11" stroke="#4a9a70" strokeWidth="2" />
                      <circle cx="7" cy="7" r="2" fill="#333" />
                    </svg>
                    <span className="ml-[6px]">Nodes</span>
                  </Row>
                  <Row className="pl-[27px]">
                    <Exp minus />
                    <Cb state="fill" className="ml-[6px]" />
                    <svg viewBox="0 0 16 16" className="ml-[1px] h-[15px] w-[15px]">
                      <path d="M8 1l6 11-5 3-8-3z" fill="#bcd2c0" stroke="#111" />
                      <path d="M8 1l1 14" stroke="#111" />
                    </svg>
                    <span className="ml-[6px]">Elements</span>
                  </Row>
                  <Row className="pl-[46px]">
                    <Exp />
                    <Cb state="check" className="ml-[6px]" />
                    <span className="ml-[22px] tracking-[-0.35px]">Solid[PSOLID]</span>
                  </Row>
                  <Row className="pl-[46px]">
                    <Exp minus />
                    <Cb className="ml-[6px]" />
                    <span className="ml-[22px] tracking-[-0.35px]">Shell[PSHELL]</span>
                  </Row>
                  <Row className="pl-[80px]">
                    <Cb />
                    <div className="ml-[1px] h-[16px] w-[16px] bg-[#ffcc00]" />
                    <span className="ml-[5px] tracking-[-0.6px]">PSHELL:2(1.0)</span>
                  </Row>
                  <Row className="pl-[61px]">
                    <Cb />
                    <div className="ml-[1px] h-[16px] w-[16px] bg-black" />
                    <span className="ml-[5px]">RBE2</span>
                  </Row>
                  <Row className="pl-[27px]">
                    <Exp />
                    <Cb state="check" className="ml-[6px]" />
                    <svg viewBox="0 0 14 14" className="ml-[1px] h-[15px] w-[15px]">
                      <path d="M7 1v7M7 8l-5 4" stroke="#1a1a1a" strokeWidth="1.2" />
                      <path d="M7 8l5 4" stroke="#e01010" strokeWidth="1.2" />
                    </svg>
                    <span className="ml-[2px] flex h-[18px] flex-1 items-center overflow-hidden bg-[#eeeeee] pl-[2px]">Local Coordinate Systems</span>
                  </Row>
                  <Row className="pl-[44px]">
                    <svg viewBox="0 0 14 14" className="h-[14px] w-[14px]">
                      <path d="M7 1l6 7-6 5-6-5z" fill="#e01010" stroke="#333" />
                    </svg>
                    <span className="ml-[8px]">Boundary Conditions</span>
                  </Row>
                </div>
              </div>
              <div className="flex flex-1 justify-center bg-[#f4f4f4] pt-[18px]">
                <div className="h-[75px] w-[2px] bg-[#8f8f8f]" />
              </div>
              <div className="absolute bottom-[6px] left-[17px] h-[2px] w-[147px] bg-[#8f8f8f]" />
            </div>
            <div className="mt-[6px]">
              <PaneHead>Parameter Window</PaneHead>
            </div>
            <div className="flex h-[16px] shrink-0 items-center bg-gradient-to-b from-[#e0ecfb] to-[#c4d8f2] pl-[6px] text-[13px] font-bold text-[#111]">
              <Exp minus />
              <span className="ml-[5px] tracking-[-0.3px]">Local Coordinate Systems</span>
            </div>
            <div className="flex h-[16px] shrink-0 border-b border-[#d0e0f4] bg-[#d4e4f7] pl-[15px] text-[12px] tracking-[-0.3px] text-[#222]">
              <span className="flex w-[91px] items-center bg-white pl-[4px]">Show/Hide</span>
              <span className="flex flex-1 items-center border-l border-[#d0e0f4] bg-white pl-[4px]">Show</span>
            </div>
            <div className="flex h-[16px] shrink-0 border-b border-[#d0e0f4] bg-[#d4e4f7] pl-[15px] text-[12px] tracking-[-0.3px] text-[#222]">
              <span className="flex w-[91px] items-center bg-white pl-[4px]">Show in Front</span>
              <span className="flex flex-1 items-center border-l border-[#d0e0f4] bg-white pl-[4px]">Disable</span>
            </div>
            <div className="flex h-[81px] shrink-0 bg-gradient-to-r from-white from-[85%] to-[#efefef]">
              <div className="ml-[106px] h-full w-[1px] bg-[#d0e0f4]" />
            </div>
            <div className="mt-[3px] h-[51px] shrink-0 border border-[#b0cbeb] bg-[#d5e4f4]" />
            <div className="mt-[5px]">
              <PaneHead>Information Window</PaneHead>
            </div>
            <div className="flex h-[25px] shrink-0 items-center bg-gradient-to-b from-[#e6f0ff] to-[#bdd6f8] pl-[11px]">
              <Slot className="w-[20px]"><Pyramid /></Slot>
              <Arrow className="ml-[2px]" />
              <Slot className="ml-[2px] w-[21px] rounded-[2px] border border-[#c9a26a] bg-gradient-to-b from-[#ffe7b0] to-[#ffb860]">
                <I>
                  <circle cx="10" cy="10" r="5.5" fill="#f02000" />
                  <path d="M10 2v16M2 10h16" stroke="#f02000" />
                </I>
              </Slot>
              <Slot className="ml-[2px]">
                <I>
                  <rect x="4" y="3" width="11" height="15" fill="#7a3f10" />
                  <rect x="7" y="2" width="6" height="3" fill="#888" />
                  <rect x="11" y="11" width="6" height="8" fill="#fff" />
                </I>
              </Slot>
            </div>
            <div className="flex min-h-0 flex-1 border border-[#a8a8a8] bg-[#efefef]">
              <div className="w-[194px] shrink-0 text-[16px] leading-[18px] tracking-[-0.25px] text-[#111]">This function cannot be used during editing.</div>
              <div className="flex flex-1 flex-col items-center justify-between border-l border-[#f8f8f8] py-[6px]">
                <div className="h-0 w-0 border-x-[5px] border-b-[6px] border-x-transparent border-b-[#a0a0a0]" />
                <div className="h-0 w-0 border-x-[5px] border-t-[6px] border-x-transparent border-t-[#a0a0a0]" />
              </div>
            </div>
          </div>
          <div className="ml-[7px] mt-[1px] flex min-w-0 flex-1 flex-col">
            <div className="flex h-[20px] shrink-0 items-end pl-[4px] text-[13px] text-[#2a5aa0]">
              <span className="h-[19px] w-[106px] leading-[17px]">data¥model.bdf</span>
              <div className="flex h-[19px] w-[208px] items-center justify-between rounded-t-[3px] border-x border-t border-[#9fc0ea] bg-[#e8f1ff] pb-[2px] pl-[3px] pr-[2px] font-bold text-[#143f88]">
                <span>hunger_brkt¥hunger_brkt.dat</span>
                <svg viewBox="0 0 10 10" className="h-[9px] w-[9px]"><path d="M1 1l8 8M9 1l-8 8" stroke="#7a97c0" strokeWidth="1.4" /></svg>
              </div>
            </div>
            <div className="h-[2px] shrink-0 bg-[#a0a8b0]" />
            <div className="flex min-h-0 flex-1">
              <div className="w-[1px] shrink-0 bg-[#777]" />
              <Viewport />
            </div>
            <div className="h-[1px] shrink-0 bg-[#aaa]" />
            <div className="h-[4px] shrink-0 bg-white" />
          </div>
        </div>
        <div className="-mx-[1px] flex h-[23px] shrink-0 items-center border-t border-[#5f8fd0] bg-gradient-to-b from-[#d8e8fc] to-[#a9c8f0] text-[13px] tracking-[-0.15px] text-[#1f4f96]">
          <span className="ml-[4px] w-[491px] whitespace-pre">Mode:Default  Left : Selecting Right : Menu</span>
          <div className="flex h-full w-[58px] shrink-0 items-center border-l border-[#9dbce6] pl-[3px]">
            <svg viewBox="0 0 16 16" className="h-[15px] w-[15px]">
              <circle cx="10" cy="10" r="5.5" fill="#8a8ae0" stroke="#222" />
              <circle cx="7" cy="7" r="6" fill="#0a7a0a" stroke="#111" />
            </svg>
            <span className="ml-[4px]">Model</span>
          </div>
          <div className="flex h-full w-[68px] shrink-0 items-center border-l border-[#9dbce6] pl-[7px]">
            <div className="h-[8px] w-[8px] border border-[#222] bg-[#e03010]" />
            <span className="ml-[4px]">Results</span>
          </div>
          <div className="flex h-full w-[205px] shrink-0 items-center border-l border-[#9dbce6] pl-[4px]">
            <svg viewBox="0 0 16 14" className="h-[14px] w-[15px]">
              <path d="M1 1h7l6 6-6 6H1zM1 5h12M1 9h12M5 1v12M9 2v10" fill="none" stroke="#222" />
            </svg>
            <span className="ml-[3px] whitespace-nowrap">Optimization Parameter[Shape]</span>
          </div>
          <div className="flex h-full w-[108px] shrink-0 items-center overflow-hidden whitespace-nowrap border-l border-[#9dbce6] pl-[4px] tracking-[-0.3px]">Node Size : 83037</div>
          <div className="flex h-full w-[24px] shrink-0 items-center overflow-hidden border-x border-[#9dbce6] pl-[3px]">Elem</div>
          <div className="ml-auto mr-[2px] self-end pb-[2px]">
            <svg viewBox="0 0 10 10" className="h-[10px] w-[10px]">
              <path d="M8 1h1v1H8zM5 5h1v1H5zM8 5h1v1H8zM2 8h1v1H2zM5 8h1v1H5zM8 8h1v1H8z" fill="#5a7fb0" />
            </svg>
          </div>
        </div>
      </div>
      <Dialog />
    </div>
  );
}
